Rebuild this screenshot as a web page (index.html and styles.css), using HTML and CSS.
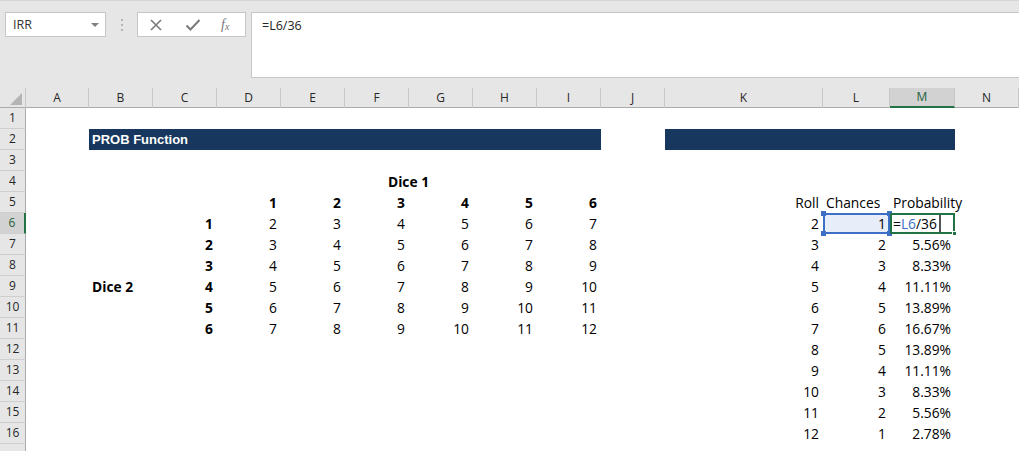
FILE: index.html
```html
<!DOCTYPE html>
<html>
<head>
<meta charset="utf-8">
<link rel="stylesheet" href="styles.css">
</head>
<body>
<div class="app">
  <div class="fbar">
    <div class="namebox"><span class="nb-text">IRR</span><span class="nb-arrow"></span></div>
    <div class="dots"><i></i><i></i><i></i></div>
    <div class="btnbox">
      <svg class="ic ic-x" width="14" height="14" viewBox="0 0 14 14"><path d="M2 2 L12 12 M12 2 L2 12" stroke="#7a7a7a" stroke-width="1.6" fill="none"/></svg>
      <svg class="ic ic-ok" width="16" height="14" viewBox="0 0 16 14"><path d="M1.5 7.5 L5.5 11.5 L14.5 2" stroke="#7a7a7a" stroke-width="2" fill="none"/></svg>
      <span class="fx">f<sub>x</sub></span>
    </div>
    <div class="formula">=L6/36</div>
  </div>

  <div class="sheet">
    <div class="row hdr">
      <div class="corner"><span class="tri"></span></div>
      <div class="ch">A</div><div class="ch">B</div><div class="ch">C</div><div class="ch">D</div><div class="ch">E</div><div class="ch">F</div><div class="ch">G</div><div class="ch">H</div><div class="ch">I</div><div class="ch">J</div><div class="ch">K</div><div class="ch">L</div><div class="ch sel">M</div><div class="ch">N</div>
    </div>

    <div class="row"><div class="rh">1</div></div>
    <div class="row"><div class="rh">2</div><div class="bar s-BI">PROB Function</div><div class="bar s-KM"></div></div>
    <div class="row"><div class="rh">3</div></div>
    <div class="row"><div class="rh">4</div><div class="c s-DI ctr b">Dice 1</div></div>
    <div class="row"><div class="rh">5</div>
      <div class="c cD r b">1</div><div class="c cE r b">2</div><div class="c cF r b">3</div><div class="c cG r b">4</div><div class="c cH r b">5</div><div class="c cI r b">6</div>
      <div class="c cK r">Roll</div><div class="c cL l">Chances</div><div class="c cM l ov">Probability</div>
    </div>
    <div class="row"><div class="rh rsel">6</div>
      <div class="c cC r b">1</div><div class="c cD r">2</div><div class="c cE r">3</div><div class="c cF r">4</div><div class="c cG r">5</div><div class="c cH r">6</div><div class="c cI r">7</div>
      <div class="c cK r">2</div><div class="c cL r ref">1<i class="k k1"></i><i class="k k2"></i><i class="k k3"></i><i class="k k4"></i></div><div class="c cM l active">=<span class="blue">L6</span>/36<span class="caret"></span><i class="g"></i></div>
    </div>
    <div class="row"><div class="rh">7</div>
      <div class="c cC r b">2</div><div class="c cD r">3</div><div class="c cE r">4</div><div class="c cF r">5</div><div class="c cG r">6</div><div class="c cH r">7</div><div class="c cI r">8</div>
      <div class="c cK r">3</div><div class="c cL r">2</div><div class="c cM r">5.56%</div>
    </div>
    <div class="row"><div class="rh">8</div>
      <div class="c cC r b">3</div><div class="c cD r">4</div><div class="c cE r">5</div><div class="c cF r">6</div><div class="c cG r">7</div><div class="c cH r">8</div><div class="c cI r">9</div>
      <div class="c cK r">4</div><div class="c cL r">3</div><div class="c cM r">8.33%</div>
    </div>
    <div class="row"><div class="rh">9</div>
      <div class="c cB l b">Dice 2</div>
      <div class="c cC r b">4</div><div class="c cD r">5</div><div class="c cE r">6</div><div class="c cF r">7</div><div class="c cG r">8</div><div class="c cH r">9</div><div class="c cI r">10</div>
      <div class="c cK r">5</div><div class="c cL r">4</div><div class="c cM r">11.11%</div>
    </div>
    <div class="row"><div class="rh">10</div>
      <div class="c cC r b">5</div><div class="c cD r">6</div><div class="c cE r">7</div><div class="c cF r">8</div><div class="c cG r">9</div><div class="c cH r">10</div><div class="c cI r">11</div>
      <div class="c cK r">6</div><div class="c cL r">5</div><div class="c cM r">13.89%</div>
    </div>
    <div class="row"><div class="rh">11</div>
      <div class="c cC r b">6</div><div class="c cD r">7</div><div class="c cE r">8</div><div class="c cF r">9</div><div class="c cG r">10</div><div class="c cH r">11</div><div class="c cI r">12</div>
      <div class="c cK r">7</div><div class="c cL r">6</div><div class="c cM r">16.67%</div>
    </div>
    <div class="row"><div class="rh">12</div><div class="c cK r">8</div><div class="c cL r">5</div><div class="c cM r">13.89%</div></div>
    <div class="row"><div class="rh">13</div><div class="c cK r">9</div><div class="c cL r">4</div><div class="c cM r">11.11%</div></div>
    <div class="row"><div class="rh">14</div><div class="c cK r">10</div><div class="c cL r">3</div><div class="c cM r">8.33%</div></div>
    <div class="row"><div class="rh">15</div><div class="c cK r">11</div><div class="c cL r">2</div><div class="c cM r">5.56%</div></div>
    <div class="row"><div class="rh">16</div><div class="c cK r">12</div><div class="c cL r">1</div><div class="c cM r">2.78%</div></div>
    <div class="row"><div class="rh"></div></div>
  </div>
</div>
</body>
</html>
```

FILE: styles.css
```css
* { box-sizing: border-box; }
html, body { margin: 0; padding: 0; }
body { width: 1019px; height: 451px; overflow: hidden; background: #fff; }
.app { width: 1019px; height: 451px; overflow: hidden; }

.fbar {
  height: 88px;
  background: #e6e6e6;
  border-top: 1px solid #d6d6d6;
  display: flex;
  align-items: flex-start;
  padding-top: 11px;
  padding-left: 5px;
  font-family: "Open Sans", "Noto Sans", sans-serif;
}
.namebox {
  width: 101px; height: 25px;
  background: #fff; border: 1px solid #c6c6c6;
  display: flex; align-items: center; justify-content: space-between;
  padding: 0 6px 0 7px;
}
.nb-text { font-size: 12.5px; color: #333; }
.nb-arrow { width: 0; height: 0; border-left: 4px solid transparent; border-right: 4px solid transparent; border-top: 4px solid #808080; }
.dots { width: 31px; height: 25px; display: flex; flex-direction: column; align-items: center; justify-content: center; gap: 3px; }
.dots i { width: 2px; height: 2px; background: #b3b3b3; display: block; }
.btnbox {
  width: 109px; height: 25px;
  background: #fff; border: 1px solid #c6c6c6;
  display: flex; align-items: center;
  padding-left: 11px;
}
.ic-x { margin-right: 22px; }
.ic-ok { margin-right: 20px; }
.fx { font-family: "Liberation Serif", serif; font-style: italic; font-size: 14px; color: #777; line-height: 1; }
.fx sub { font-size: 10px; vertical-align: -1px; }
.formula {
  margin-left: 5px;
  flex: 1; height: 66px;
  background: #fff; border: 1px solid #c6c6c6; border-right: none;
  padding: 4px 0 0 10px;
  font-size: 12.5px; color: #222;
}

.sheet {
  --cols: 26px 63px 64px 64px 64px 64px 64px 64px 64px 64px 64px 158px 67px 65px 64px;
  font-family: "Open Sans", "Noto Sans", sans-serif;
  font-size: 13.8px;
  color: #000;
}
.row {
  display: grid;
  grid-template-columns: var(--cols);
  height: 21px;
}
.row.hdr { height: 20px; background: #e6e6e6; border-bottom: 1px solid #ababab; }
.corner { position: relative; border-right: 1px solid #c8c8c8; }
.tri { position: absolute; right: 3px; bottom: 3px; width: 0; height: 0; border-left: 12px solid transparent; border-bottom: 12px solid #b4b4b4; }
.ch {
  border-right: 1px solid #c8c8c8;
  text-align: center;
  font-size: 12px; line-height: 19px;
  color: #262626;
}
.ch.sel { background: #d2d2d2; border-bottom: 2px solid #217346; color: #1f5e3b; line-height: 18px; }

.rh {
  grid-column: 1;
  background: #e6e6e6;
  border-right: 1px solid #ababab;
  border-bottom: 1px solid #cfcfcf;
  text-align: center;
  font-size: 12px; line-height: 20px;
  color: #262626;
}
.rh.rsel { background: #d2d2d2; border-right: 2px solid #217346; color: #1f5e3b; }

.c { white-space: nowrap; padding: 1px 4px 0 3px; line-height: 20px; }
.r { text-align: right; }
.l { text-align: left; }
.ctr { text-align: center; }
.b { font-weight: 700; }
.ov { overflow: visible; }

.cB { grid-column: 3; } .cC { grid-column: 4; } .cD { grid-column: 5; } .cE { grid-column: 6; }
.cF { grid-column: 7; } .cG { grid-column: 8; } .cH { grid-column: 9; } .cI { grid-column: 10; }
.cK { grid-column: 12; } .cL { grid-column: 13; } .cM { grid-column: 14; }
.s-BI { grid-column: 3 / 11; }
.s-KM { grid-column: 12 / 15; }
.s-DI { grid-column: 5 / 11; }

.bar {
  background: #17375e; color: #fff;
  font-family: "Liberation Sans", Arial, sans-serif; font-weight: 700; font-size: 13px;
  line-height: 21px; padding-left: 3px;
}

.ref { position: relative; background: #e8eef9; box-shadow: inset 0 0 0 2px #3c6fc5; padding-right: 4px; }
.k { position: absolute; width: 5px; height: 5px; background: #3c6fc5; }
.k1 { left: -2px; top: -2px; } .k2 { right: -2px; top: -2px; }
.k3 { left: -2px; bottom: -2px; } .k4 { right: -2px; bottom: -2px; }
.active { position: relative; box-shadow: inset 0 0 0 2px #217346; padding-left: 3px; }
.blue { color: #3c6fc5; }
.caret { position: absolute; left: 49px; top: 2px; width: 2px; height: 17px; background: #555; }
.g { position: absolute; right: -2px; bottom: -2px; width: 5px; height: 5px; background: #217346; border: 1px solid #fff; }
```
